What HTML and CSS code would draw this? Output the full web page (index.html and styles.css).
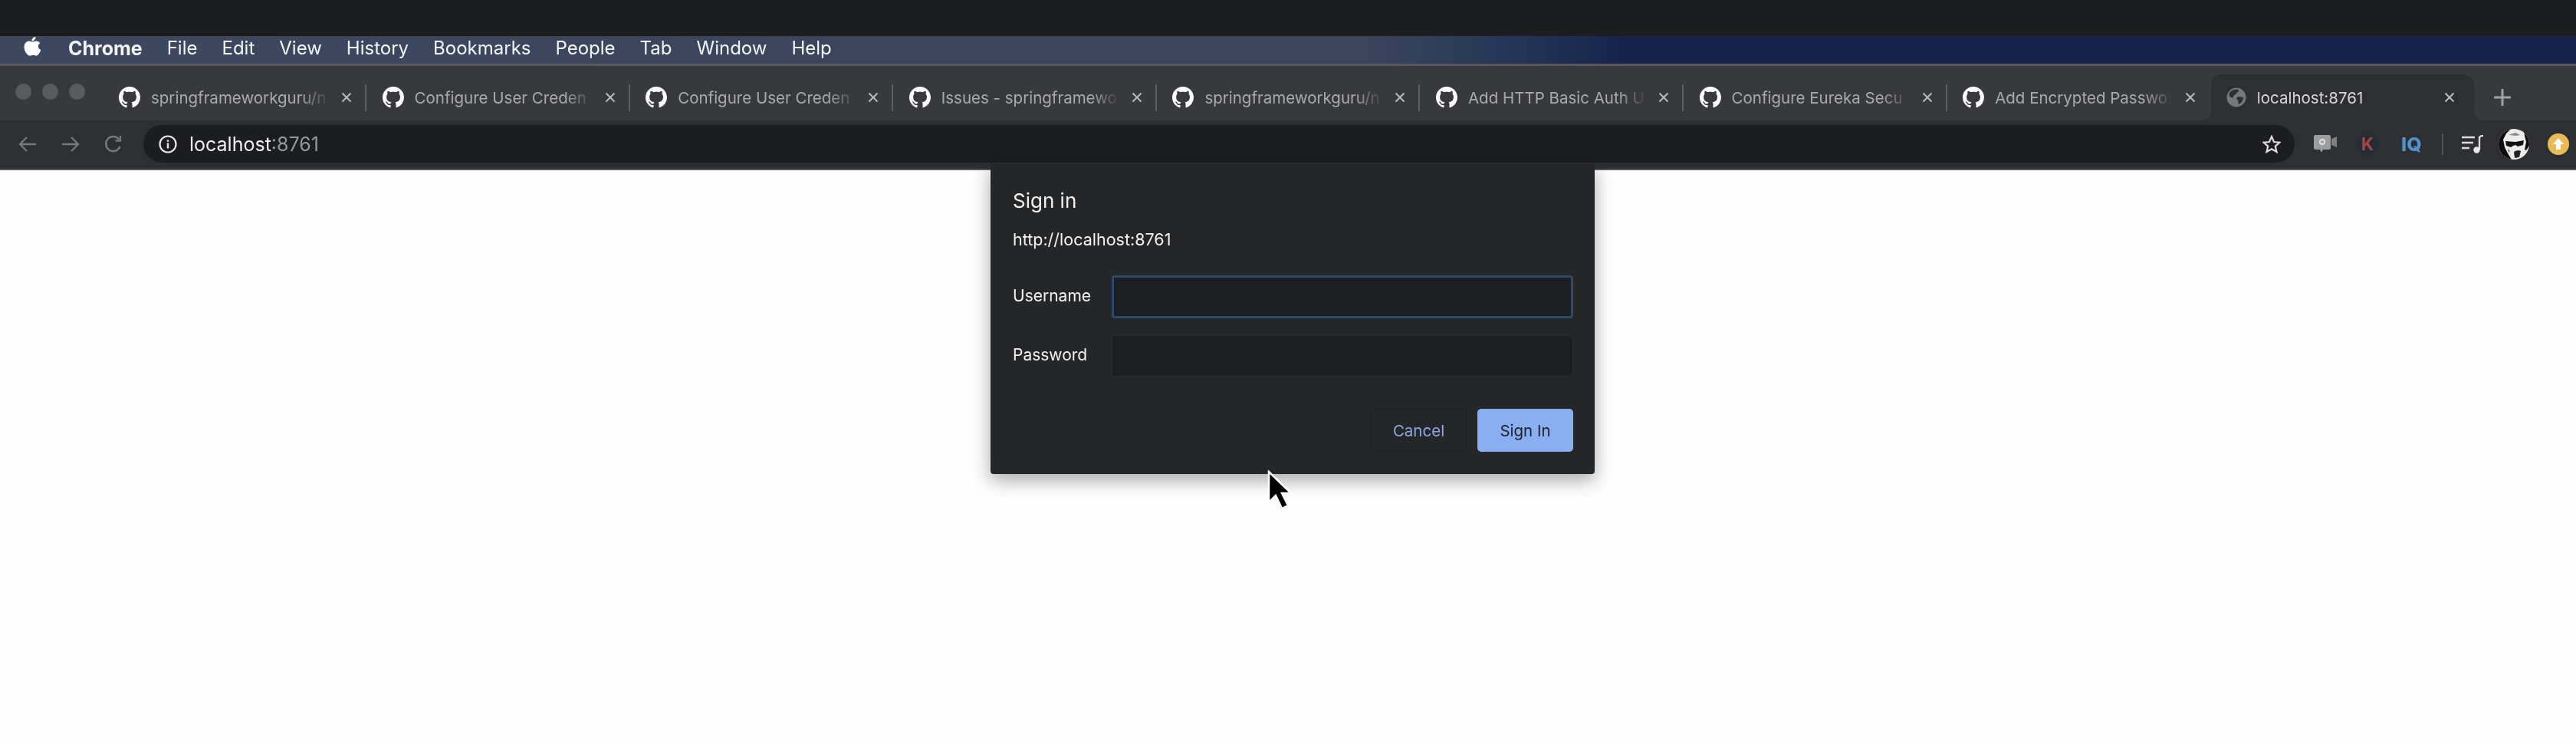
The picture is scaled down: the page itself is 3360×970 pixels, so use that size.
FILE: index.html
```html
<!DOCTYPE html>
<html lang="en">
<head>
    <meta charset="UTF-8">
    <title>localhost:8761</title>
    <link rel="stylesheet" href="styles.css">
</head>
<body>
    <svg class="icon-defs" width="0" height="0">
        <symbol id="github" viewBox="0 0 16 16">
            <path fill="#fff" d="M8 0C3.58 0 0 3.58 0 8c0 3.54 2.29 6.53 5.47 7.59.4.07.55-.17.55-.38 0-.19-.01-.82-.01-1.49-2.01.37-2.53-.49-2.69-.94-.09-.23-.48-.94-.82-1.13-.28-.15-.68-.52-.01-.53.63-.01 1.08.58 1.23.82.72 1.21 1.87.87 2.33.66.07-.52.28-.87.51-1.07-1.78-.2-3.64-.89-3.64-3.95 0-.87.31-1.59.82-2.15-.08-.2-.36-1.02.08-2.12 0 0 .67-.21 2.2.82.64-.18 1.32-.27 2-.27.68 0 1.36.09 2 .27 1.53-1.04 2.2-.82 2.2-.82.44 1.1.16 1.92.08 2.12.51.56.82 1.27.82 2.15 0 3.07-1.87 3.75-3.65 3.95.29.25.54.73.54 1.48 0 1.07-.01 1.93-.01 2.2 0 .21.15.46.55.38A8.013 8.013 0 0016 8c0-4.42-3.58-8-8-8z"/>
        </symbol>
        <symbol id="close" viewBox="0 0 14 14">
            <path d="M1.5 1.5l11 11M12.5 1.5l-11 11" fill="none" stroke="#b9babc" stroke-width="2"/>
        </symbol>
    </svg>

    <div class="screen">
        <div class="top-black"></div>

        <div class="menubar">
            <svg class="apple" viewBox="0 0 24 28" width="24" height="28">
                <path fill="#fff" d="M12.2 6.6c1.4 0 2.9-1.2 5-1.2 2.2 0 4 1.1 5.1 2.8-3.6 2.1-3 7.200 1 8.900-1 2.900-3.400 7.600-6 7.600-1.500 0-2.300-1-4-1-1.800 0-2.700 1-4.200 1C5.800 24.700 1.500 19 1.500 13.500c0-5 3.200-8 6.300-8 2 0 3.200 1.100 4.400 1.100zM16.500 0c.2 2.800-2.300 5.700-5 5.500C11.200 2.800 13.900.2 16.500 0z"/>
            </svg>
            <span class="menu-item menu-app">Chrome</span>
            <span class="menu-item">File</span>
            <span class="menu-item">Edit</span>
            <span class="menu-item">View</span>
            <span class="menu-item">History</span>
            <span class="menu-item">Bookmarks</span>
            <span class="menu-item">People</span>
            <span class="menu-item">Tab</span>
            <span class="menu-item">Window</span>
            <span class="menu-item">Help</span>
        </div>

        <div class="tabstrip">
            <div class="lights">
                <span class="light"></span>
                <span class="light"></span>
                <span class="light"></span>
            </div>
            <div class="tab">
                <svg class="favicon"><use href="#github"/></svg>
                <span class="tab-title">springframeworkguru/n</span>
                <svg class="tab-close"><use href="#close"/></svg>
                <span class="tab-sep"></span>
            </div>
            <div class="tab">
                <svg class="favicon"><use href="#github"/></svg>
                <span class="tab-title">Configure User Creden</span>
                <svg class="tab-close"><use href="#close"/></svg>
                <span class="tab-sep"></span>
            </div>
            <div class="tab">
                <svg class="favicon"><use href="#github"/></svg>
                <span class="tab-title">Configure User Creden</span>
                <svg class="tab-close"><use href="#close"/></svg>
                <span class="tab-sep"></span>
            </div>
            <div class="tab">
                <svg class="favicon"><use href="#github"/></svg>
                <span class="tab-title">Issues - springframewo</span>
                <svg class="tab-close"><use href="#close"/></svg>
                <span class="tab-sep"></span>
            </div>
            <div class="tab">
                <svg class="favicon"><use href="#github"/></svg>
                <span class="tab-title">springframeworkguru/n</span>
                <svg class="tab-close"><use href="#close"/></svg>
                <span class="tab-sep"></span>
            </div>
            <div class="tab">
                <svg class="favicon"><use href="#github"/></svg>
                <span class="tab-title">Add HTTP Basic Auth U</span>
                <svg class="tab-close"><use href="#close"/></svg>
                <span class="tab-sep"></span>
            </div>
            <div class="tab">
                <svg class="favicon"><use href="#github"/></svg>
                <span class="tab-title">Configure Eureka Secu</span>
                <svg class="tab-close"><use href="#close"/></svg>
                <span class="tab-sep"></span>
            </div>
            <div class="tab">
                <svg class="favicon"><use href="#github"/></svg>
                <span class="tab-title">Add Encrypted Passwo</span>
                <svg class="tab-close"><use href="#close"/></svg>
                <span class="tab-sep tab-sep-hidden"></span>
            </div>
            <div class="tab tab-active">
                <svg class="favicon favicon-globe" viewBox="0 0 26 26">
                    <circle cx="13" cy="13" r="12.500" fill="#77787b"/>
                    <path fill="#2e2f33" d="M6 5c3-3 8-3 10-2 1 2-2 3-3 5s-4 1-4 4-4 1-5-1 0-4 2-6zM14 13c3-2 5 0 8 0 0 4-3 8-6 9-1-2 0-3-1-5s-3-2-1-4z"/>
                </svg>
                <span class="tab-title tab-title-active">localhost:8761</span>
                <svg class="tab-close"><use href="#close"/></svg>
            </div>
            <svg class="new-tab" viewBox="0 0 22 22" width="22" height="22">
                <path d="M11 0v22M0 11h22" fill="none" stroke="#9fa1a5" stroke-width="3"/>
            </svg>
        </div>

        <div class="toolbar">
            <div class="nav-buttons">
                <svg class="nav-icon" viewBox="0 0 24 22" width="24" height="22">
                    <path d="M23 11H2M11 2l-9 9 9 9" fill="none" stroke="#77787b" stroke-width="2.400"/>
                </svg>
                <svg class="nav-icon" viewBox="0 0 24 22" width="24" height="22">
                    <path d="M1 11h21M13 2l9 9-9 9" fill="none" stroke="#77787b" stroke-width="2.400"/>
                </svg>
                <svg class="nav-icon" viewBox="0 0 24 24" width="24" height="24">
                    <path d="M20.500 15a9.500 9.500 0 1 1-1.500-9.500M21 1v6.500h-6.500" fill="none" stroke="#77787b" stroke-width="2.400"/>
                </svg>
            </div>
            <div class="address-bar">
                <svg class="info-icon" viewBox="0 0 24 24" width="24" height="24">
                    <circle cx="12" cy="12" r="10.500" fill="none" stroke="#e8e8e8" stroke-width="2.200"/>
                    <path d="M12 10.500v7M12 6.500v2.200" fill="none" stroke="#e8e8e8" stroke-width="2.400"/>
                </svg>
                <span class="url-host">localhost</span><span class="url-port">:8761</span>
                <svg class="star-icon" viewBox="0 0 24 24" width="24" height="24">
                    <path d="M12 2l3 7 7.500.7-5.700 5 1.700 7.300L12 18.200 5.500 22l1.700-7.300-5.700-5L9 9z" fill="none" stroke="#dcdcdc" stroke-width="2.200"/>
                </svg>
            </div>
            <div class="actions">
                <svg class="ext-camera" viewBox="0 0 30 25" width="30" height="25">
                    <path fill="#9c9d9f" d="M2 1h18c1 0 2 1 2 2v15c0 1-1 2-2 2h-8l-2 4-2-4H2c-1 0-2-1-2-2V3c0-1 1-2 2-2z"/>
                    <path fill="#7d7e80" d="M23 6l7-3v14l-7-3z"/>
                    <circle cx="11" cy="10" r="3" fill="none" stroke="#e4e4e4" stroke-width="1.800"/>
                </svg>
                <span class="ext-k">K</span>
                <span class="ext-iq">IQ</span>
                <span class="actions-sep"></span>
                <svg class="ext-music" viewBox="0 0 28 24" width="28" height="24">
                    <path d="M0 3h17M0 10h15M0 17h10" fill="none" stroke="#dcdcdc" stroke-width="2.600"/>
                    <path d="M23 2v17" fill="none" stroke="#dcdcdc" stroke-width="2.400"/>
                    <path d="M23 3c1-2 3-2 5-2" fill="none" stroke="#dcdcdc" stroke-width="2.400"/>
                    <circle cx="19.500" cy="19.500" r="4.200" fill="#e8e8e8"/>
                </svg>
                <svg class="avatar" viewBox="0 0 40 40" width="40" height="40">
                    <clipPath id="avatarClip"><circle cx="20" cy="20" r="20"/></clipPath>
                    <g clip-path="url(#avatarClip)">
                        <rect width="40" height="40" fill="#ececec"/>
                        <path fill="#0d0d0d" d="M0 0h16L10 6 6 14l2 10 4 8 5 8H0z"/>
                        <path fill="#0d0d0d" d="M33 0h7v22l-4 6-2-1 2-10-2-8z"/>
                        <path fill="#111" d="M9 16l13 1 11-2-1 6-7 2-3-2-3 1-3 2-6-2z"/>
                        <path fill="#8a8a8a" d="M13 8l9-3 6 3-5 1z"/>
                        <path fill="#222" d="M20 30c3-2 6-3 9-1l-2 8-6 1z"/>
                        <path fill="#777" d="M12 25l3 4-2 2z"/>
                    </g>
                </svg>
                <svg class="update-badge" viewBox="0 0 28 28" width="28" height="28">
                    <circle cx="14" cy="14" r="14" fill="#e8bb57"/>
                    <path fill="#fff" d="M14 6l7 8h-4v7h-6v-7H7z"/>
                </svg>
            </div>
        </div>

        <div class="page-content"></div>

        <!-- диалог поверх страницы -->
        <div class="signin-dialog">
            <div class="dialog-title">Sign in</div>
            <div class="dialog-origin">http://localhost:8761</div>
            <div class="dialog-form">
                <label class="field-label">Username</label>
                <div class="field-input field-input-focus"></div>
                <label class="field-label">Password</label>
                <div class="field-input"></div>
            </div>
            <div class="dialog-buttons">
                <span class="btn btn-cancel">Cancel</span>
                <span class="btn btn-signin">Sign In</span>
            </div>
        </div>

        <svg class="cursor" viewBox="0 0 34 52" width="34" height="52">
            <path fill="#000" stroke="#fff" stroke-width="2.500" d="M3 2v40l9-9 8 17 8-4-8-16h12z"/>
        </svg>
    </div>
</body>
</html>
```

FILE: styles.css
```css
* {
    box-sizing: border-box;
}
html, body {
    margin: 0;
    height: 100%;
    overflow: hidden;
    background-color: #fefefe;
}
.icon-defs {
    display: none;
}
.screen {
    position: relative;
    display: flex;
    flex-direction: column;
    height: 970px;
    font-family: Inter, "Liberation Sans", sans-serif;
    filter: blur(0.6px);
}

.top-black {
    height: 47px;
    background-color: #1c1d1f;
}

.menubar {
    display: flex;
    align-items: center;
    height: 36px;
    padding: 0 0 5px 30px;
    background: linear-gradient(90deg, #3b4860 0%, #3a445c 53%, #2a3c58 57%, #16244c 63%, #16244c 100%);
    color: #f4f4f4;
}
.apple {
    margin-right: 35px;
    margin-top: -2px;
}
.menu-item {
    margin-right: 32px;
    font-size: 24px;
}
.menu-app {
    font-weight: 700;
    font-size: 25px;
}

.tabstrip {
    position: relative;
    display: flex;
    align-items: flex-end;
    height: 74px;
    padding-left: 135px;
    background-color: #38393d;
    border-top: 3px solid #58585a;
}
.lights {
    position: absolute;
    left: 20px;
    top: 23px;
    display: flex;
    gap: 14px;
}
.light {
    width: 21px;
    height: 21px;
    border-radius: 50%;
    background-color: #5a5b5e;
}
.tab {
    position: relative;
    display: flex;
    align-items: center;
    width: 343.6px;
    height: 60px;
    padding-left: 20px;
}
.tab-active {
    background-color: #2e2f33;
    border-radius: 14px 14px 0 0;
}
.tab-active::before,
.tab-active::after {
    content: "";
    position: absolute;
    bottom: 0;
    width: 14px;
    height: 14px;
}
.tab-active::before {
    left: -14px;
    background: radial-gradient(circle at 0 0, #38393d 14px, #2e2f33 14.5px);
}
.tab-active::after {
    right: -14px;
    background: radial-gradient(circle at 100% 0, #38393d 14px, #2e2f33 14.5px);
}
.favicon {
    flex: none;
    width: 28px;
    height: 28px;
}
.favicon-globe {
    width: 26px;
    height: 26px;
}
.tab-title {
    width: 238px;
    margin-left: 14px;
    overflow: hidden;
    white-space: nowrap;
    font-size: 20.5px;
    color: #a9aaac;
    -webkit-mask-image: linear-gradient(90deg, #000 82%, transparent 98%);
    mask-image: linear-gradient(90deg, #000 82%, transparent 98%);
}
.tab-title-active {
    width: 234px;
    color: #d6d6d7;
    -webkit-mask-image: none;
    mask-image: none;
}
.tab-close {
    flex: none;
    width: 14px;
    height: 14px;
    margin-left: 10px;
}
.tab-sep {
    width: 2px;
    height: 35px;
    margin-left: 17px;
    background-color: #5d5e61;
}
.tab-sep-hidden {
    visibility: hidden;
}
.new-tab {
    margin: 0 0 19px 26px;
}

.toolbar {
    display: flex;
    height: 65px;
    padding-top: 6px;
    background-color: #2e2f33;
    border-bottom: 2px solid #59595b;
}
.nav-buttons {
    display: flex;
    align-items: center;
    gap: 32px;
    width: 187px;
    height: 49px;
    padding-left: 24px;
}
.address-bar {
    display: flex;
    align-items: center;
    flex: 1;
    height: 49px;
    padding: 0 18px 0 20px;
    background-color: #1c1d20;
    border-radius: 25px;
    font-size: 25px;
}
.info-icon {
    margin-right: 16px;
}
.url-host {
    color: #f0f0f0;
}
.url-port {
    color: #96979a;
}
.star-icon {
    margin-left: auto;
}
.actions {
    display: flex;
    align-items: center;
    width: 367px;
    height: 49px;
    padding-left: 25px;
}
.ext-k {
    display: flex;
    justify-content: center;
    align-items: center;
    width: 28px;
    height: 28px;
    margin-left: 26px;
    border-radius: 50%;
    background-color: #232d3a;
    color: #a8453f;
    font-size: 23px;
    font-weight: 700;
}
.ext-iq {
    margin-left: 30px;
    color: #5191cc;
    font-size: 25px;
    font-weight: 800;
}
.actions-sep {
    width: 2px;
    height: 28px;
    margin: 0 24px 0 26px;
    background-color: #505154;
}
.avatar {
    margin-left: 20px;
}
.update-badge {
    margin-left: 24px;
}

.page-content {
    flex: 1;
    background-color: #fefefe;
}

.signin-dialog {
    position: absolute;
    left: 1292px;
    top: 214px;
    width: 788px;
    height: 404px;
    padding: 31px 28px 0 29px;
    background-color: #252628;
    border-radius: 4px;
    box-shadow: 0 8px 24px rgba(0, 0, 0, 0.35);
    color: #f2f2f2;
}
.dialog-title {
    font-size: 26px;
    line-height: 34px;
}
.dialog-origin {
    margin-top: 16px;
    font-size: 21.5px;
    line-height: 34px;
}
.dialog-form {
    display: grid;
    grid-template-columns: 129px 1fr;
    row-gap: 22px;
    align-items: center;
    margin-top: 30px;
}
.field-label {
    padding-bottom: 3px;
    font-size: 21px;
}
.field-input {
    height: 54px;
    background-color: #1d1e21;
    border: 1px solid #2b2c2f;
    border-radius: 4px;
}
.field-input-focus {
    height: 56px;
    border: 3px solid #2c4a6e;
}
.dialog-buttons {
    display: flex;
    justify-content: flex-end;
    gap: 14px;
    margin-top: 42px;
}
.btn {
    display: flex;
    justify-content: center;
    align-items: center;
    width: 125px;
    height: 56px;
    border-radius: 5px;
    font-size: 20.5px;
}
.btn-cancel {
    border: 1px solid #1e1f21;
    color: #88a9e8;
}
.btn-signin {
    background-color: #8aaef2;
    color: #1f2226;
}

.cursor {
    position: absolute;
    left: 1652px;
    top: 613px;
}
```
